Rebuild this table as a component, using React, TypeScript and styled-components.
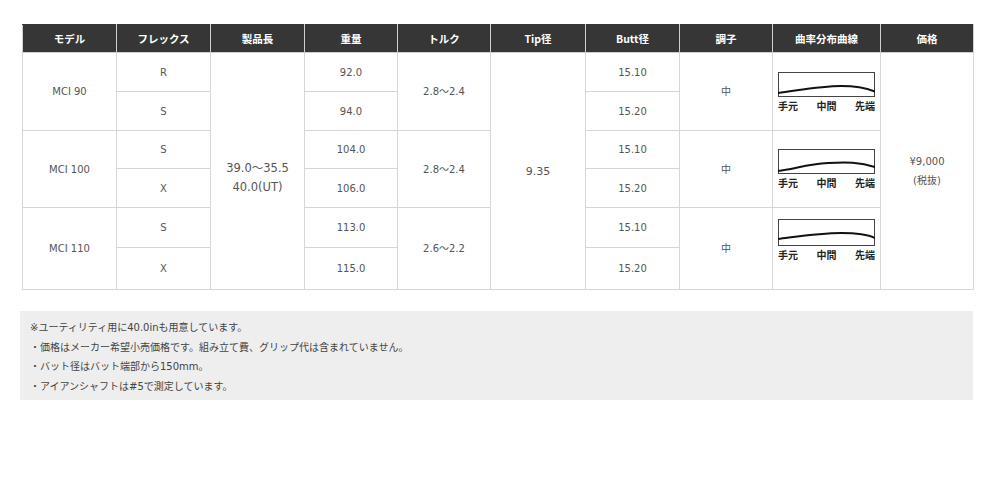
import React from "react";
import styled, { createGlobalStyle } from "styled-components";

const Global = createGlobalStyle`
  html, body { margin: 0; padding: 0; background: #ffffff; }
  body { font-family: "DejaVu Sans", "Noto Sans CJK JP", sans-serif; }
`;

const Page = styled.div`
  padding: 24px 27px 0 20px;
  width: 953px;
`;

const Table = styled.table`
  margin-left: 2px;
  width: 951px;
  table-layout: fixed;
  border-collapse: collapse;
  font-family: "DejaVu Sans", "Noto Sans CJK JP", sans-serif;
  font-size: 10px;
  color: #555;
`;

const Th = styled.th`
  background: #363636;
  color: #ffffff;
  font-family: "Noto Sans CJK JP", "DejaVu Sans", sans-serif;
  font-weight: 700;
  font-size: 10.5px;
  height: 27px;
  padding: 0;
  border: 1px solid #cfcfcf;
  border-top-color: #363636;
  text-align: center;
  vertical-align: middle;
`;

const Td = styled.td<{ $h?: number; $top?: number }>`
  border: 1px solid #d6d6d6;
  text-align: center;
  vertical-align: ${(p) => (p.$top !== undefined ? "top" : "middle")};
  padding: ${(p) => (p.$top !== undefined ? `${p.$top}px 0 0` : "0")};
  height: ${(p) => (p.$h ? `${p.$h}px` : "auto")};
  line-height: 19px;
`;

const BigText = styled.div`
  font-size: 11.5px;
  line-height: 19px;
  padding-top: 14px;
`;

const TipText = styled.div`
  font-size: 11px;
`;

const Chart = styled.div`
  width: 97px;
  margin: 0 auto;
  line-height: 1;
`;

const ChartLabels = styled.div`
  display: flex;
  justify-content: space-between;
  font-family: "Noto Sans CJK JP", sans-serif;
  font-weight: 700;
  font-size: 10px;
  color: #222;
  margin-top: 3px;
  line-height: 12px;
`;

const Notes = styled.div`
  margin-top: 21px;
  background: #eeeeee;
  padding: 7px 10px 4px;
  font-family: "DejaVu Sans", "Noto Sans CJK JP", sans-serif;
  font-size: 10px;
  color: #444;
  line-height: 19.5px;
`;

const NoteLine = styled.div``;

type CurveProps = { d: string; h?: number };

const CurveChart: React.FC<CurveProps> = ({ d, h = 25 }) => (
  <Chart>
    <svg width="97" height={h} viewBox={`0 0 97 ${h}`} style={{ display: "block" }}>
      <rect x="0.5" y="0.5" width="96" height={h - 1} fill="#fff" stroke="#444" strokeWidth="1" />
      <path d={d} fill="none" stroke="#111" strokeWidth="2" />
    </svg>
    <ChartLabels>
      <span>手元</span>
      <span>中間</span>
      <span>先端</span>
    </ChartLabels>
  </Chart>
);

const headers = ["モデル", "フレックス", "製品長", "重量", "トルク", "Tip径", "Butt径", "調子", "曲率分布曲線", "価格"];
const widths = [94, 94, 94, 93, 93, 95, 94, 93, 108, 93];

const curve1 = "M0,21 C20,18.5 42,14 63,14 C78,14 88,16 97,19.5";
const curve2 = "M0,22 C16,20 30,15 50,14 C68,13 82,13 97,18";
const curve3 = "M0,20 C20,17.5 42,14 63,14 C80,14 90,15.5 97,19";

export default function App() {
  return (
    <Page>
      <Global />
      <Table>
        <colgroup>
          {widths.map((w, i) => (
            <col key={i} style={{ width: w }} />
          ))}
        </colgroup>
        <thead>
          <tr>
            {headers.map((h) => (
              <Th key={h}>{h}</Th>
            ))}
          </tr>
        </thead>
        <tbody>
          <tr>
            <Td rowSpan={2}>MCI 90</Td>
            <Td $h={38}>R</Td>
            <Td rowSpan={6}>
              <BigText>
                39.0～35.5
                <br />
                40.0(UT)
              </BigText>
            </Td>
            <Td>92.0</Td>
            <Td rowSpan={2}>2.8～2.4</Td>
            <Td rowSpan={6}>
              <TipText>9.35</TipText>
            </Td>
            <Td>15.10</Td>
            <Td rowSpan={2}>中</Td>
            <Td rowSpan={2}>
              <CurveChart d={curve1} />
            </Td>
            <Td rowSpan={6}>
              ¥9,000
              <br />
              (税抜)
            </Td>
          </tr>
          <tr>
            <Td $h={38}>S</Td>
            <Td>94.0</Td>
            <Td>15.20</Td>
          </tr>
          <tr>
            <Td rowSpan={2}>MCI 100</Td>
            <Td $h={37}>S</Td>
            <Td>104.0</Td>
            <Td rowSpan={2}>2.8～2.4</Td>
            <Td>15.10</Td>
            <Td rowSpan={2}>中</Td>
            <Td rowSpan={2}>
              <CurveChart d={curve2} />
            </Td>
          </tr>
          <tr>
            <Td $h={38}>X</Td>
            <Td>106.0</Td>
            <Td>15.20</Td>
          </tr>
          <tr>
            <Td rowSpan={2}>MCI 110</Td>
            <Td $h={39}>S</Td>
            <Td>113.0</Td>
            <Td rowSpan={2}>2.6～2.2</Td>
            <Td>15.10</Td>
            <Td rowSpan={2}>中</Td>
            <Td rowSpan={2} $top={11}>
              <CurveChart d={curve3} h={27} />
            </Td>
          </tr>
          <tr>
            <Td $h={41}>X</Td>
            <Td>115.0</Td>
            <Td>15.20</Td>
          </tr>
        </tbody>
      </Table>
      <Notes>
        <NoteLine>※ユーティリティ用に40.0inも用意しています。</NoteLine>
        <NoteLine>・価格はメーカー希望小売価格です。組み立て費、グリップ代は含まれていません。</NoteLine>
        <NoteLine>・バット径はバット端部から150mm。</NoteLine>
        <NoteLine>・アイアンシャフトは#5で測定しています。</NoteLine>
      </Notes>
    </Page>
  );
}
